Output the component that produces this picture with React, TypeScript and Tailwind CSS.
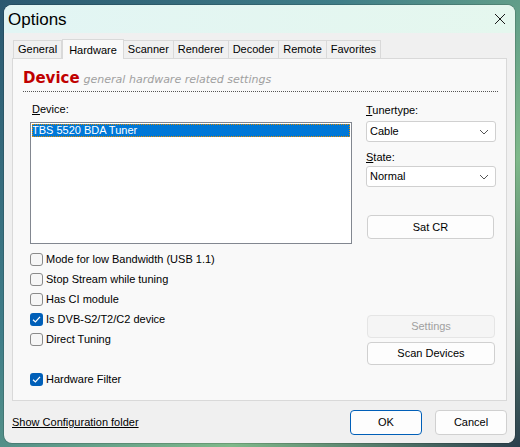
import { useState } from 'react'

const ui = { fontFamily: '"Liberation Sans", Arial, sans-serif' }

const tabs = ['General', 'Hardware', 'Scanner', 'Renderer', 'Decoder', 'Remote', 'Favorites']

function CheckBox({ label, checked }: { label: string; checked?: boolean }) {
  return (
    <label className="flex items-center gap-[3px] h-[20px] text-[11px] text-black">
      {checked ? (
        <span className="w-[13px] h-[13px] rounded-[3px] bg-[#005fb8] flex items-center justify-center">
          <svg width="9" height="9" viewBox="0 0 9 9">
            <path d="M1 4.8 L3.4 7 L8 1.8" fill="none" stroke="white" strokeWidth="1.2" />
          </svg>
        </span>
      ) : (
        <span className="w-[13px] h-[13px] rounded-[3px] border border-[#8a8a8a] bg-[#f6f6f6]" />
      )}
      <span>{label}</span>
    </label>
  )
}

function Combo({ value }: { value: string }) {
  return (
    <div className="h-[21px] w-[130px] rounded-[3px] border border-[#d0d0d0] bg-white flex items-center justify-between pl-[3px] pr-[6px] text-[11px] text-black">
      <span>{value}</span>
      <svg width="10" height="6" viewBox="0 0 10 6">
        <path d="M1 1 L5 5 L9 1" fill="none" stroke="#555" strokeWidth="1" />
      </svg>
    </div>
  )
}

function Button({ children, disabled, primary, className }: { children: string; disabled?: boolean; primary?: boolean; className?: string }) {
  return (
    <button
      className={
        'rounded-[4px] border text-[11px] flex items-center justify-center ' +
        (disabled
          ? 'border-[#e5e5e5] bg-[#f5f5f5] text-[#a0a0a0] '
          : primary
            ? 'border-[#005fb8] bg-[#fdfdfd] text-black '
            : 'border-[#d0d0d0] bg-[#fdfdfd] text-black ') +
        (className ?? '')
      }
    >
      {children}
    </button>
  )
}

export default function App() {
  const [tab, setTab] = useState('Hardware')
  return (
    <div
      className="w-[520px] h-[447px] overflow-hidden pt-[5px] pl-[4px] bg-[linear-gradient(135deg,#2b5870_0%,#3f7d88_35%,#7fb98a_70%,#2b3f4d_100%)]"
      style={ui}
    >
      <div className="w-[511px] h-[438px] rounded-[8px] bg-[#f0f0f0] flex flex-col overflow-hidden shadow-[0_0_0_1px_rgba(0,0,0,0.15)]">
        {/* title bar */}
        <div className="h-[28px] shrink-0 flex items-center justify-between pl-[4px] pr-[9px] bg-[linear-gradient(90deg,#e2f5f4,#e5f7ee)]">
          <span className="text-[17px] text-black leading-none">Options</span>
          <svg width="12" height="12" viewBox="0 0 12 12">
            <path d="M1 1 L11 11 M11 1 L1 11" stroke="#1a1a1a" strokeWidth="1" />
          </svg>
        </div>

        {/* tab strip */}
        <div className="flex items-end pl-[9px] h-[25px]">
          {tabs.map((t) =>
            t === tab ? (
              <div
                key={t}
                className="h-[20px] px-[6px] border border-b-0 border-[#d9d9d9] bg-[#f9f9f9] text-[11px] text-black flex items-start pt-[2px] -mb-px z-10 relative"
              >
                {t}
              </div>
            ) : (
              <div
                key={t}
                onClick={() => setTab(t)}
                className="h-[18px] px-[4px] border border-b-0 border-l-0 first:border-l border-[#d9d9d9] bg-[#f0f0f0] text-[11px] text-black flex items-center"
              >
                {t}
              </div>
            )
          )}
        </div>

        {/* tab page */}
        <div className="mx-[8px] h-[343px] border border-[#d9d9d9] bg-[#f9f9f9] px-[10px] pt-[12px]">
          <div className="flex items-baseline gap-[4px] h-[20px]" style={{ fontFamily: '"DejaVu Sans", Verdana, sans-serif' }}>
            <span className="text-[15px] font-bold text-[#c00000] leading-none">Device</span>
            <span className="text-[11px] italic text-[#a0a0a0] leading-none">general hardware related settings</span>
          </div>
          <div className="border-b border-dotted border-[#555] mr-[-2px]" />

          <div className="flex mt-[9px] pl-[7px]">
            <div className="flex flex-col w-[323px]">
              <span className="text-[11px] text-black h-[16px] leading-[16px] pl-[2px]">
                <span className="underline">D</span>evice:
              </span>
              <div className="mt-[5px] h-[122px] border border-[#828790] bg-white p-px">
                <div className="h-[13px] bg-[#0078d7] outline outline-1 outline-dotted outline-[#e08a00] -outline-offset-1 text-white text-[11px] leading-[13px]">
                  TBS 5520 BDA Tuner
                </div>
              </div>

              <div className="flex flex-col mt-[5px]">
                <CheckBox label="Mode for low Bandwidth (USB 1.1)" />
                <CheckBox label="Stop Stream while tuning" />
                <CheckBox label="Has CI module" />
                <CheckBox label="Is DVB-S2/T2/C2 device" checked />
                <CheckBox label="Direct Tuning" />
                <div className="h-[20px]" />
                <CheckBox label="Hardware Filter" checked />
              </div>
            </div>

            <div className="flex flex-col ml-[14px] w-[130px]">
              <span className="text-[11px] text-black h-[16px] leading-[16px] mt-[1px]">
                <span className="underline">T</span>unertype:
              </span>
              <div className="mt-[3px]">
                <Combo value="Cable" />
              </div>
              <span className="text-[11px] text-black h-[16px] leading-[16px] mt-[7px]">
                <span className="underline">S</span>tate:
              </span>
              <div className="mt-[1px]">
                <Combo value="Normal" />
              </div>
              <Button className="mt-[28px] ml-px w-[127px] h-[24px]">Sat CR</Button>
              <Button disabled className="mt-[76px] ml-px w-[128px] h-[23px]">Settings</Button>
              <Button className="mt-[4px] ml-px w-[128px] h-[23px]">Scan Devices</Button>
            </div>
          </div>
        </div>

        {/* footer */}
        <div className="flex items-center justify-between pl-[8px] pr-[8px] flex-1">
          <span className="text-[11px] text-black underline">Show Configuration folder</span>
          <div className="flex gap-[13px]">
            <Button primary className="w-[72px] h-[25px]">OK</Button>
            <Button className="w-[72px] h-[25px]">Cancel</Button>
          </div>
        </div>
      </div>
    </div>
  )
}
